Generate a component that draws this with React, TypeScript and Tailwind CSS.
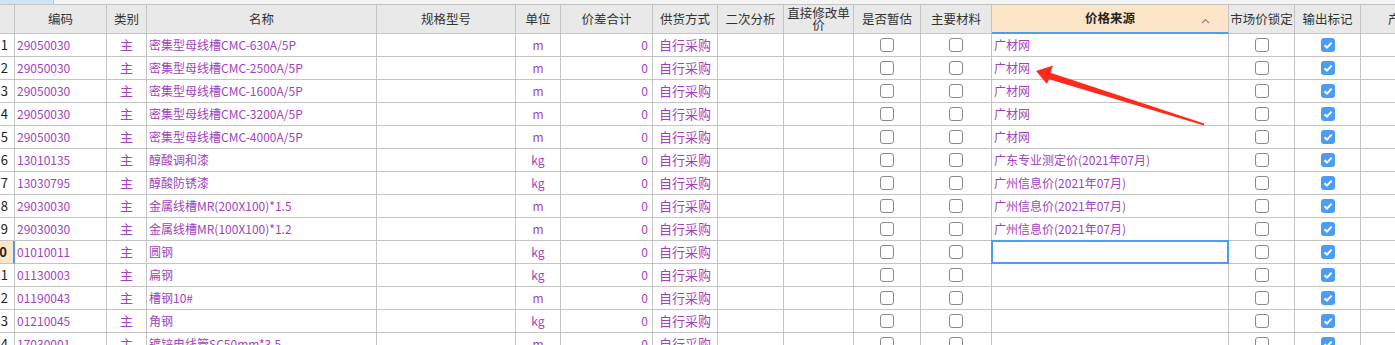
import { Fragment } from "react"

const font = { fontFamily: '"Noto Sans CJK SC", "Noto Sans", sans-serif' }

const headers = [
  "",
  "编码",
  "类别",
  "名称",
  "规格型号",
  "单位",
  "价差合计",
  "供货方式",
  "二次分析",
  "直接修改单价",
  "是否暂估",
  "主要材料",
  "价格来源",
  "市场价锁定",
  "输出标记",
  "产地厂家",
]

const rows = [
  { code: "29050030", name: "密集型母线槽CMC-630A/5P", unit: "m", source: "广材网" },
  { code: "29050030", name: "密集型母线槽CMC-2500A/5P", unit: "m", source: "广材网" },
  { code: "29050030", name: "密集型母线槽CMC-1600A/5P", unit: "m", source: "广材网" },
  { code: "29050030", name: "密集型母线槽CMC-3200A/5P", unit: "m", source: "广材网" },
  { code: "29050030", name: "密集型母线槽CMC-4000A/5P", unit: "m", source: "广材网" },
  { code: "13010135", name: "醇酸调和漆", unit: "kg", source: "广东专业测定价(2021年07月)" },
  { code: "13030795", name: "醇酸防锈漆", unit: "kg", source: "广州信息价(2021年07月)" },
  { code: "29030030", name: "金属线槽MR(200X100)*1.5", unit: "m", source: "广州信息价(2021年07月)" },
  { code: "29030030", name: "金属线槽MR(100X100)*1.2", unit: "m", source: "广州信息价(2021年07月)" },
  { code: "01010011", name: "圆钢", unit: "kg", source: "" },
  { code: "01130003", name: "扁钢", unit: "kg", source: "" },
  { code: "01190043", name: "槽钢10#", unit: "m", source: "" },
  { code: "01210045", name: "角钢", unit: "kg", source: "" },
  { code: "17030001", name: "镀锌电线管SC50mm*3.5", unit: "m", source: "" },
]

const cols =
  "grid grid-cols-[15px_92px_40px_230px_139px_45px_92px_65px_66px_70px_67px_71px_237px_66px_66px_108px]"

const cell = "border-r border-b border-[#c4c4c4] flex items-center overflow-hidden"

function Box({ checked }: { checked?: boolean }) {
  if (checked) {
    return (
      <div className="w-[14px] h-[14px] rounded-[3px] bg-[#4b9cf4] flex items-center justify-center">
        <svg width="10" height="10" viewBox="0 0 10 10">
          <path d="M1.5 5.2 L4 7.6 L8.6 2.6" fill="none" stroke="white" strokeWidth="2" />
        </svg>
      </div>
    )
  }
  return <div className="w-[14px] h-[14px] rounded-[3px] border border-[#8a8a8a] bg-white" />
}

export default function App() {
  return (
    <div className="relative w-[1395px] h-[345px] overflow-hidden bg-white" style={font}>
      <div className="w-[1469px]">
        {/* top strip */}
        <div className="flex h-[5px] border-b border-[#c4c4c4] bg-[#f4f4f4]">
          <div className="w-[54px] bg-[#cde5f7] border-r border-[#c4c4c4]" />
        </div>

        {/* header */}
        <div className={`${cols} h-[29px] bg-[#e9e9e9] text-[12.5px] text-[#333]`}>
          {headers.map((h, i) => {
            if (i === 12) {
              return (
                <div
                  key={i}
                  className="relative border-r border-b-2 border-r-[#c4c4c4] border-b-[#4b9cf4] bg-[#fde6c7] flex items-center justify-center font-bold text-[#222]"
                >
                  {h}
                  <svg className="absolute right-[18px] top-[13px]" width="9" height="6" viewBox="0 0 9 6">
                    <path d="M1 5 L4.5 1.5 L8 5" fill="none" stroke="#888" strokeWidth="1.2" />
                  </svg>
                </div>
              )
            }
            if (i === 9) {
              return (
                <div
                  key={i}
                  className="border-r border-b border-[#c4c4c4] overflow-hidden text-center leading-[12px] px-[2px] pt-[2px]"
                >
                  {h}
                </div>
              )
            }
            return (
              <div
                key={i}
                className={`${cell} whitespace-nowrap ${i === 15 ? "justify-start pl-[27px]" : "justify-center"}`}
              >
                {h}
              </div>
            )
          })}
        </div>

        {/* body */}
        <div className={`${cols} auto-rows-[23px] text-[12px] text-[#a33fc0]`}>
          {rows.map((r, idx) => {
            const n = idx + 1
            const current = n === 10
            return (
              <Fragment key={idx}>
                <div
                  className={`border-b border-[#c4c4c4] flex items-center justify-end pr-[6px] overflow-hidden text-[13px] text-[#222] ${
                    current ? "bg-[#fde5c8] font-bold border-r-2 border-r-[#4b9cf4]" : "border-r"
                  }`}
                >
                  {n}
                </div>
                <div className={`${cell} pl-[2px]`}>{r.code}</div>
                <div className={`${cell} justify-center text-[13px]`}>主</div>
                <div className={`${cell} pl-[2px] whitespace-nowrap`}>{r.name}</div>
                <div className={cell} />
                <div className={`${cell} justify-center`}>{r.unit}</div>
                <div className={`${cell} justify-end pr-[4px]`}>0</div>
                <div className={`${cell} justify-center text-[13px]`}>自行采购</div>
                <div className={cell} />
                <div className={cell} />
                <div className={`${cell} justify-center`}>
                  <Box />
                </div>
                <div className={`${cell} justify-center`}>
                  <Box />
                </div>
                <div className={`${cell} relative overflow-visible pl-[2px] whitespace-nowrap`}>
                  {r.source}
                  {current && <div className="absolute -top-px -left-px -right-px -bottom-px border-2 border-[#4b9cf4]" />}
                </div>
                <div className={`${cell} justify-center`}>
                  <Box />
                </div>
                <div className={`${cell} justify-center`}>
                  <Box checked />
                </div>
                <div className={cell} />
              </Fragment>
            )
          })}
        </div>
      </div>

      {/* red annotation arrow */}
      <svg className="absolute left-0 top-0 pointer-events-none" width="1395" height="345">
        <polygon
          points="1036,71 1053,65.5 1050.5,72.8 1204,123.4 1204,125.4 1049,79.2 1047,84"
          fill="#fe2a1c"
        />
      </svg>
    </div>
  )
}
